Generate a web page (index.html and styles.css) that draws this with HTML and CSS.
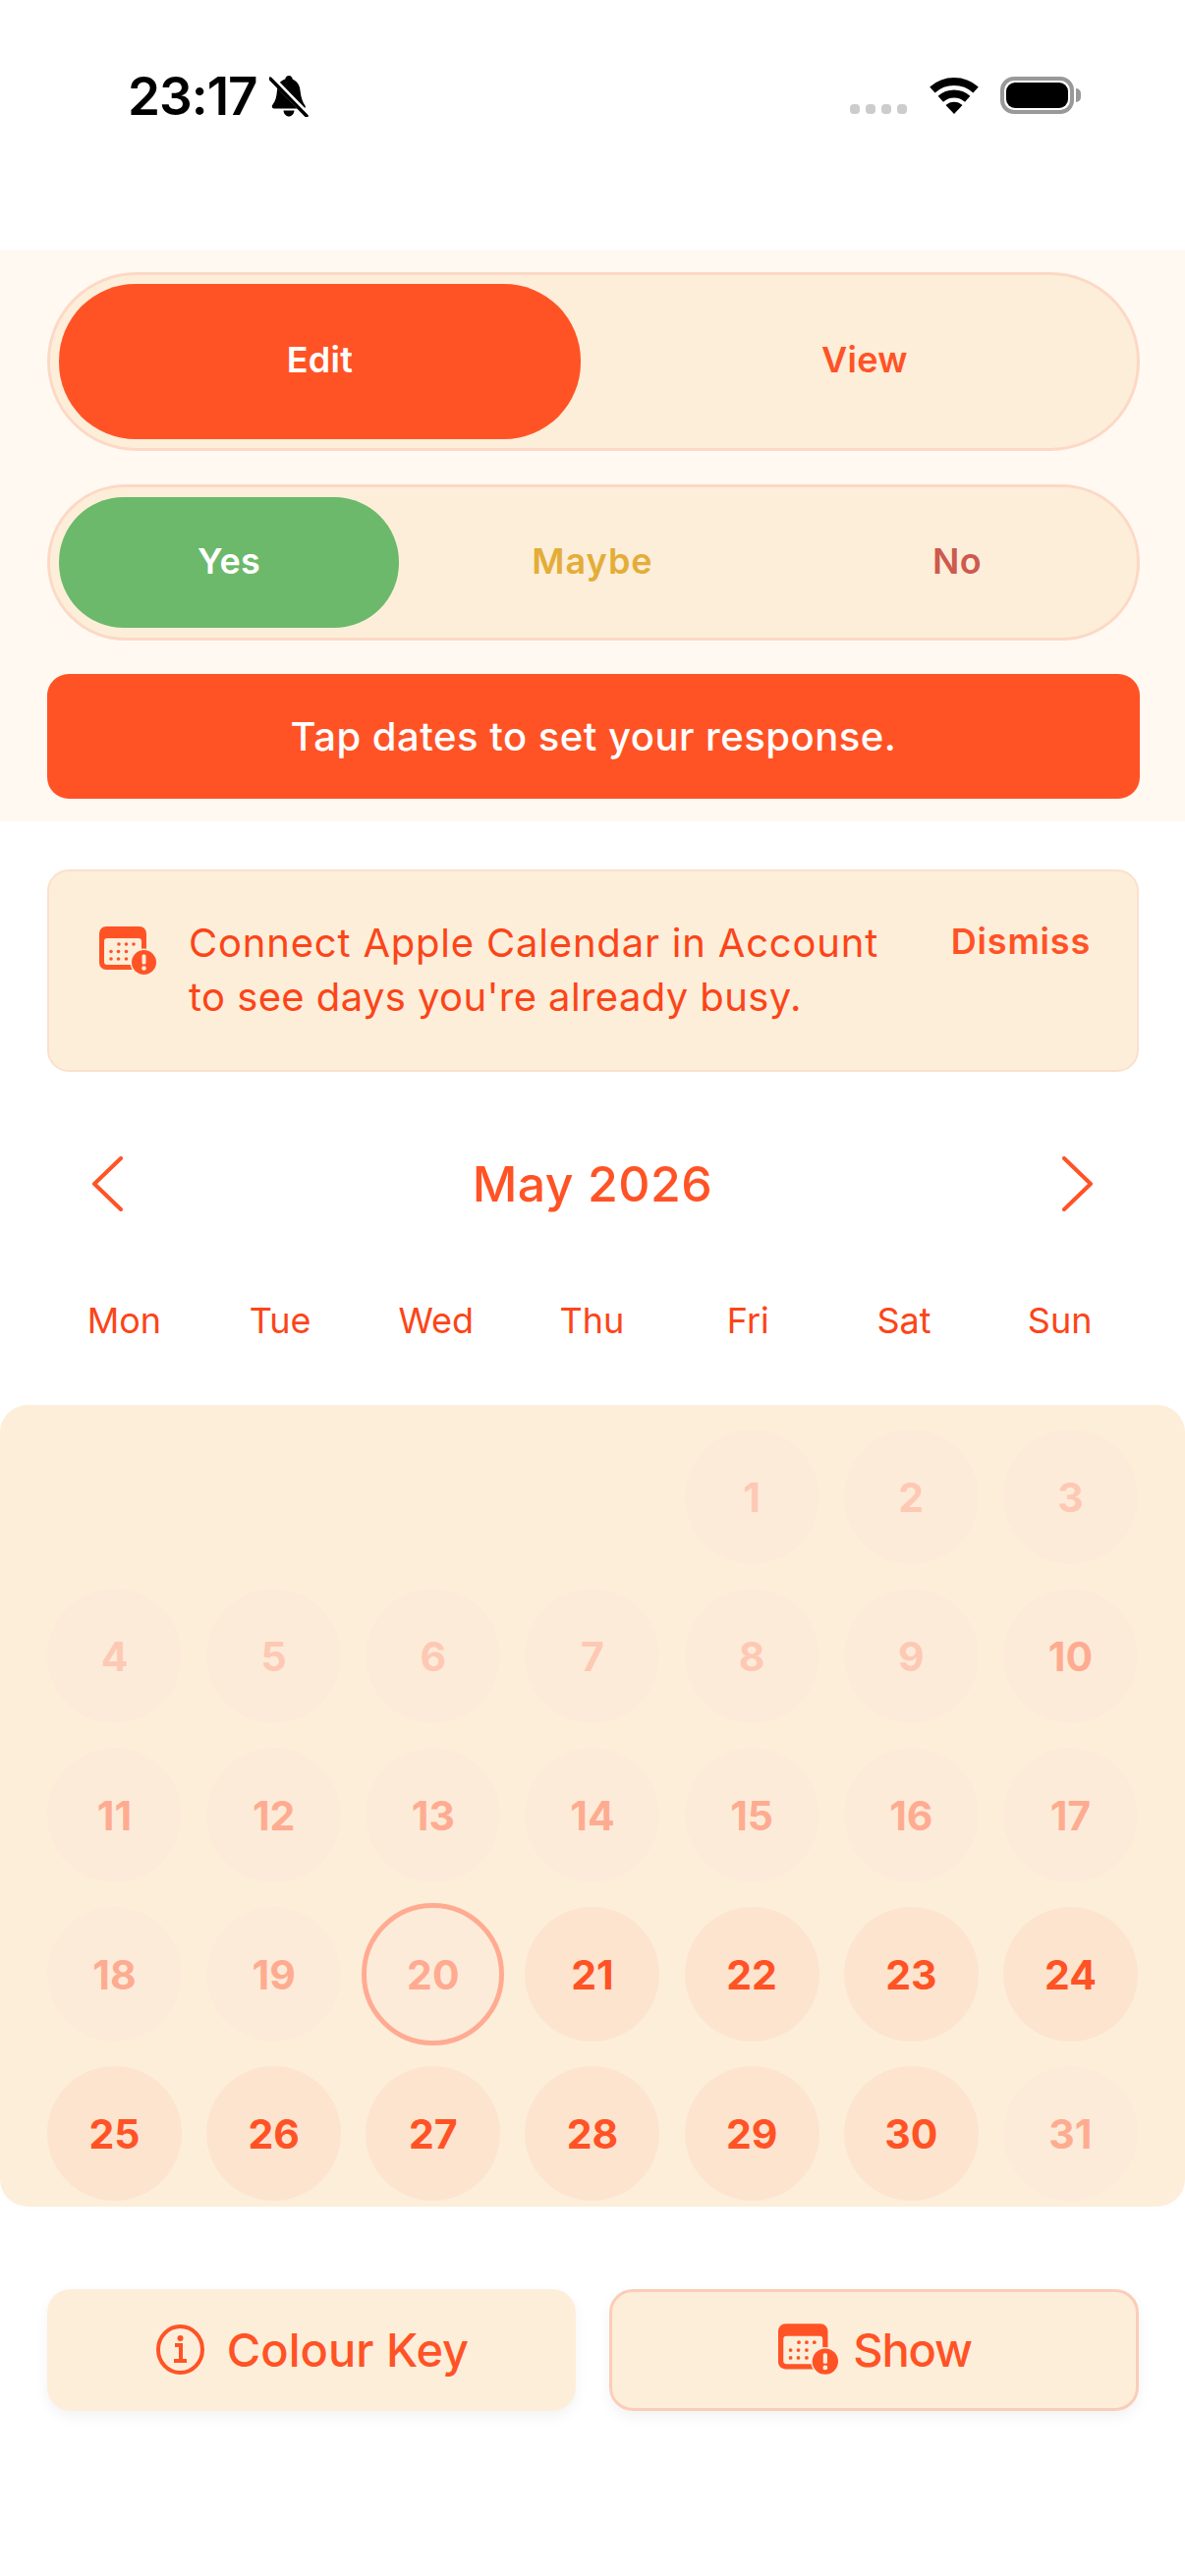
FILE: index.html
```html
<!DOCTYPE html>
<html>

<head>
    <meta charset="UTF-8">
    <meta name="viewport" content="width=device-width, initial-scale=1.0">
    <title>May 2026</title>
    <link rel="stylesheet" href="styles.css">
</head>

<body>
    <svg class="defs" width="0" height="0">
        <symbol id="cal-alert" viewBox="0 0 58 49">
            <rect class="cal-body" x="0" y="0" width="48" height="44" rx="7"/>
            <rect class="cal-window" x="5" y="12" width="38" height="27" rx="3"/>
            <g class="cal-dots">
                <circle cx="20" cy="18" r="1.8"/><circle cx="27.5" cy="18" r="1.8"/><circle cx="35" cy="18" r="1.8"/>
                <circle cx="12" cy="25.5" r="1.8"/><circle cx="19.5" cy="25.5" r="1.8"/><circle cx="27.5" cy="25.5" r="1.8"/>
                <circle cx="12" cy="33" r="1.8"/><circle cx="19.5" cy="33" r="1.8"/><circle cx="27.5" cy="33" r="1.8"/>
            </g>
            <circle class="cal-window" cx="45.5" cy="36.5" r="14"/>
            <circle class="cal-body" cx="45.5" cy="36.5" r="12.5"/>
            <rect class="cal-window" x="43.5" y="28.5" width="4" height="10" rx="1.5"/>
            <circle class="cal-window" cx="45.5" cy="42.5" r="2.3"/>
        </symbol>
    </svg>

    <div class="status-bar">
        <div class="status-left">
            <span class="clock">23:17</span>
            <svg class="bell" viewBox="0 0 40 42">
                <path d="M20 0c-2 0-3.400 1.500-3.700 3.500C11 5 8.500 9.500 8 15c-.5 6-1.500 11-4.500 14.500C2 31.500 3 33.500 5.500 33.500h29c2 0 3-1.500 2-3C32 24 32 17 31 12 30 8 27 5 23.700 3.500 23.400 1.500 22 0 20 0z"/>
                <path d="M14.500 35.500h11c-.3 3.500-2.700 6-5.500 6s-5.200-2.500-5.500-6z"/>
                <path class="bell-gap" d="M1 1l38 39"/>
                <path class="bell-slash" d="M1 3l37 38"/>
            </svg>
        </div>
        <div class="status-right">
            <div class="signal"><i></i><i></i><i></i><i></i></div>
            <svg class="wifi" viewBox="0 0 50 37">
                <path d="M2.900 12.500A33 33 0 0 1 47.100 12.500"/>
                <path d="M11.300 21.800A20.500 20.500 0 0 1 38.700 21.800"/>
                <path class="wifi-tip" d="M25 37L16.500 28A12.500 12.500 0 0 1 33.500 28z"/>
            </svg>
            <div class="battery"><div class="battery-level"></div></div>
            <div class="battery-nub"></div>
        </div>
    </div>

    <div class="controls">
        <div class="toggle toggle-mode">
            <button class="seg seg-primary">Edit</button>
            <button class="seg seg-view">View</button>
        </div>
        <div class="toggle toggle-answer">
            <button class="seg seg-yes">Yes</button>
            <button class="seg seg-maybe">Maybe</button>
            <button class="seg seg-no">No</button>
        </div>
        <div class="hint">Tap dates to set your response.</div>
    </div>

    <div class="notice">
        <svg class="notice-icon"><use href="#cal-alert"/></svg>
        <p class="notice-text">Connect Apple Calendar in Account<br><span class="notice-line">to see days you're already busy.</span></p>
        <span class="notice-dismiss">Dismiss</span>
    </div>

    <div class="month-row">
        <svg class="chevron" viewBox="0 0 32 56"><path d="M30 2L3 28l27 26"/></svg>
        <h1 class="month-title">May 2026</h1>
        <svg class="chevron" viewBox="0 0 32 56"><path d="M2 2l27 26L2 54"/></svg>
    </div>

    <div class="weekdays">
        <span>Mon</span><span>Tue</span><span>Wed</span><span>Thu</span><span>Fri</span><span>Sat</span><span>Sun</span>
    </div>

    <div class="calendar">
        <div class="days">
            <span class="blank"></span><span class="blank"></span><span class="blank"></span><span class="blank"></span>
            <span class="day faint">1</span><span class="day faint">2</span><span class="day faint">3</span>
            <span class="day faint">4</span><span class="day faint">5</span><span class="day faint">6</span><span class="day faint">7</span><span class="day faint">8</span><span class="day faint">9</span><span class="day past">10</span>
            <span class="day past">11</span><span class="day past">12</span><span class="day past">13</span><span class="day past">14</span><span class="day past">15</span><span class="day past">16</span><span class="day past">17</span>
            <span class="day past">18</span><span class="day past">19</span><span class="day today">20</span><span class="day open">21</span><span class="day open">22</span><span class="day open">23</span><span class="day open">24</span>
            <span class="day open">25</span><span class="day open">26</span><span class="day open">27</span><span class="day open">28</span><span class="day open">29</span><span class="day open">30</span><span class="day past">31</span>
        </div>
    </div>

    <div class="actions">
        <button class="action">
            <svg class="info-icon" viewBox="0 0 49 51">
                <ellipse cx="24.500" cy="25.500" rx="22.500" ry="23.500"/>
                <path d="M19 21h6v15M18 37h13"/>
                <circle class="info-dot" cx="24.500" cy="14" r="3"/>
            </svg>
            Colour Key
        </button>
        <button class="action action-outline">
            <svg class="show-icon"><use href="#cal-alert"/></svg>
            Show
        </button>
    </div>
</body>

</html>
```

FILE: styles.css
```css
* {
    box-sizing: border-box;
}

body {
    margin: 0;
    width: 1206px;
    height: 2622px;
    overflow: hidden;
    background-color: #fff;
    color: #ff5326;
    font-family: Inter, "Noto Sans", sans-serif;
}

.defs {
    position: absolute;
}

.cal-body, .cal-dots {
    fill: #ff5326;
}

.cal-window {
    fill: #fdeeda;
}

/* status bar */
.status-bar {
    height: 254px;
    padding: 76px 106px 0 130px;
    display: flex;
    justify-content: space-between;
    align-items: flex-start;
}

.status-left {
    display: flex;
    align-items: center;
    gap: 12px;
    height: 44px;
}

.clock {
    color: #000;
    font-size: 53px;
    font-weight: 600;
    letter-spacing: -1px;
    line-height: 44px;
}

.bell {
    width: 40px;
    height: 42px;
    fill: #000;
}

.bell-gap {
    fill: none;
    stroke: #fff;
    stroke-width: 6;
}

.bell-slash {
    fill: none;
    stroke: #000;
    stroke-width: 3.5;
    stroke-linecap: round;
}

.status-right {
    display: flex;
    align-items: flex-start;
    padding-top: 2px;
}

.signal {
    display: flex;
    gap: 6px;
    margin-top: 28px;
    margin-right: 23px;
}

.signal i {
    width: 10px;
    height: 10px;
    border-radius: 4px;
    background-color: #ccc;
}

.wifi {
    width: 50px;
    height: 37px;
    margin-top: 1px;
    margin-right: 22px;
}

.wifi path {
    fill: none;
    stroke: #000;
    stroke-width: 8;
}

.wifi .wifi-tip {
    fill: #000;
    stroke: none;
}

.battery {
    width: 75px;
    height: 38px;
    border: 4px solid #999;
    border-radius: 14px;
    padding: 2px;
}

.battery-level {
    height: 100%;
    background-color: #000;
    border-radius: 9px;
}

.battery-nub {
    width: 5px;
    height: 14px;
    margin-top: 12px;
    margin-left: 2px;
    background-color: #999;
    border-radius: 0 6px 6px 0;
}

/* edit/view and answer toggles */
.controls {
    background-color: #fff9f2;
    padding: 23px 46px 23px 48px;
    display: flex;
    flex-direction: column;
}

.toggle {
    display: grid;
    background-color: #fdeeda;
    border: 3px solid #fcd9c5;
    padding: 9px;
    column-gap: 12px;
}

.toggle-mode {
    height: 182px;
    border-radius: 91px;
    grid-template-columns: 531px 1fr;
    column-gap: 21px;
}

.toggle-answer {
    height: 159px;
    margin-top: 34px;
    border-radius: 80px;
    padding: 10px 9px;
    grid-template-columns: 346px 370px 1fr;
}

.seg {
    border: none;
    background: none;
    padding: 0 0 4px;
    font-family: inherit;
    font-size: 36px;
    font-weight: 600;
    letter-spacing: 0.3px;
    border-radius: 78px;
}

.toggle-answer .seg {
    border-radius: 66px;
}

.seg-primary {
    background-color: #ff5326;
    color: #fff;
}

.seg-view {
    color: #ff5326;
}

.toggle-answer .seg-yes {
    background-color: #6cb96b;
    color: #fff;
}

.seg-maybe {
    color: #e3ad38;
    letter-spacing: 1px;
}

.seg-no {
    color: #cd5a4e;
}

.hint {
    height: 127px;
    margin-top: 34px;
    background-color: #ff5326;
    color: #fff;
    border-radius: 22px;
    font-size: 40px;
    font-weight: 500;
    letter-spacing: 0.5px;
    display: flex;
    align-items: center;
    justify-content: center;
}

/* calendar connect notice */
.notice {
    height: 206px;
    margin: 49px 47px 0 48px;
    padding: 0 47px 0 51px;
    background-color: #fdeeda;
    border: 2px solid #fbe0cd;
    border-radius: 22px;
    display: flex;
    align-items: flex-start;
}

.notice-icon {
    width: 58px;
    height: 49px;
    margin-top: 56px;
    flex-shrink: 0;
}

.notice-text {
    margin: 45px 0 0 33px;
    font-size: 40px;
    letter-spacing: 0.8px;
    line-height: 55px;
    flex: 1;
    color: #fb4518;
    white-space: nowrap;
}

.notice-line {
    letter-spacing: 0.4px;
}

.notice-dismiss {
    margin-top: 49px;
    font-size: 36px;
    font-weight: 600;
    letter-spacing: 0.8px;
}

/* month heading */
.month-row {
    height: 100px;
    margin-top: 64px;
    padding: 0 93px;
    display: flex;
    align-items: center;
    justify-content: space-between;
}

.chevron {
    width: 32px;
    height: 56px;
    fill: none;
    stroke: #ff5326;
    stroke-width: 4;
    stroke-linecap: round;
    stroke-linejoin: round;
}

.month-title {
    margin: 0;
    font-size: 50px;
    font-weight: 500;
    letter-spacing: 0.5px;
}

.weekdays {
    height: 50px;
    margin-top: 64px;
    padding: 0 48px 0 47px;
    display: grid;
    grid-template-columns: repeat(7, 1fr);
    align-items: center;
    text-align: center;
    font-size: 36px;
    color: #fb4518;
}

/* day grid */
.calendar {
    height: 816px;
    margin-top: 61px;
    padding: 25px 48px 0;
    background-color: #fdeeda;
    border-radius: 28px;
    box-shadow: 0 2px 8px rgba(0, 0, 0, 0.01);
}

.days {
    display: grid;
    grid-template-columns: repeat(7, 137px);
    grid-auto-rows: 137px;
    justify-content: space-between;
    row-gap: 25px;
}

.day {
    border-radius: 50%;
    display: flex;
    align-items: center;
    justify-content: center;
    font-size: 41px;
    font-weight: 700;
}

.faint {
    background-color: #fdebd9;
    color: #fdc9b4;
}

.past {
    background-color: #fdebd9;
    color: #feac91;
}

.today {
    background-color: #fdebd9;
    color: #ffab92;
    outline: 5px solid #ffab92;
    outline-offset: -1.500px;
}

.open {
    background-color: #fde4cf;
    color: #ff5326;
}

/* bottom buttons */
.actions {
    margin-top: 84px;
    padding: 0 47px 0 48px;
    display: grid;
    grid-template-columns: 538px 1fr;
    column-gap: 34px;
}

.action {
    height: 124px;
    padding: 0 0 2px 2px;
    background-color: #fdeeda;
    color: #ff5326;
    border: none;
    border-radius: 24px;
    box-shadow: 0 6px 14px rgba(0, 0, 0, 0.05);
    font-family: inherit;
    font-size: 47px;
    font-weight: 500;
    display: flex;
    align-items: center;
    justify-content: center;
    gap: 23px;
}

.action-outline {
    border: 3px solid #fbcdb9;
    gap: 15px;
    letter-spacing: -1.2px;
}

.info-icon {
    width: 49px;
    height: 51px;
    fill: none;
    stroke: #ff5326;
    stroke-width: 4;
}

.info-icon .info-dot {
    fill: #ff5326;
    stroke: none;
}

.show-icon {
    width: 61px;
    height: 52px;
}
```
